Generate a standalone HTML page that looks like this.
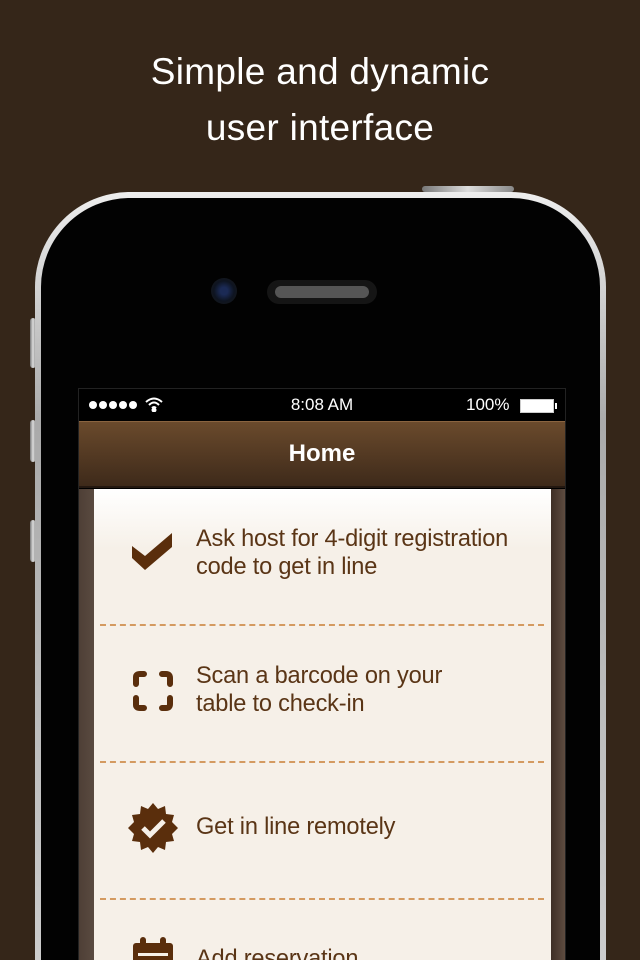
<!DOCTYPE html>
<html><head><style>
*{margin:0;padding:0;box-sizing:border-box}
html,body{width:640px;height:960px;overflow:hidden}
body{background:#352619;position:relative;font-family:"Liberation Sans",sans-serif}
.title{position:absolute;top:44px;left:0;width:640px;text-align:center;color:#fff;font-size:37px;line-height:56px;letter-spacing:.3px}
.btn{position:absolute;background:linear-gradient(90deg,#777,#ddd,#888);border-radius:3px}
.phone{position:absolute;left:35px;top:192px;width:571px;height:768px;border-radius:95px 95px 0 0;background:linear-gradient(180deg,#eee,#aaa 30%,#ccc);padding:6px 6px 0 6px}
.inner{width:100%;height:100%;border-radius:89px 89px 0 0;background:#020202}
.screen{position:absolute;left:78px;top:388px;width:488px;height:572px;background:#000;border:1px solid #222;border-bottom:0;overflow:hidden}
.status{height:32px;color:#fff;font-size:17px;position:relative}
.nav{height:67px;background:linear-gradient(180deg,#6a4a2c,#3e2a1a);border-top:1px solid #8a6440;border-bottom:2px solid #241810;color:#fff;font-size:24px;font-weight:bold;text-align:center;line-height:64px}
.content{position:absolute;top:100px;left:0;width:486px;height:500px;background:linear-gradient(90deg,#4e3f36,#65554a 6%,#4e3f36 14px)}
.card{position:absolute;left:15px;top:0;width:457px;height:500px;background:linear-gradient(180deg,#fff,#f6f0e8 60px,#f6f0e8)}
.right{position:absolute;right:0;top:0;width:14px;height:500px;background:linear-gradient(90deg,#3e2f26,#5e4c40)}
.row{position:absolute;left:0;width:457px;color:#5a3516;font-size:23.6px;line-height:28px;letter-spacing:-.2px}
.row .t{position:absolute;left:102px;white-space:nowrap}
.dash{position:absolute;left:6px;width:444px;height:0;border-top:2px dashed #d49a60}
.dot{position:absolute;top:12px;width:8px;height:8px;border-radius:50%;background:#fff}
</style></head><body>
<div class="title">Simple and dynamic<br>user interface</div>
<div class="btn" style="left:422px;top:186px;width:92px;height:6px"></div>
<div class="btn" style="left:30px;top:318px;width:6px;height:50px"></div>
<div class="btn" style="left:30px;top:420px;width:6px;height:42px"></div>
<div class="btn" style="left:30px;top:520px;width:6px;height:42px"></div>
<div class="phone"><div class="inner"></div></div>
<div style="position:absolute;left:211px;top:278px;width:26px;height:26px;border-radius:50%;background:radial-gradient(circle,#1b2a55 20%,#0e1420 55%,#1a1a1a)"></div>
<div style="position:absolute;left:267px;top:280px;width:110px;height:24px;border-radius:12px;background:#151515"><div style="margin:6px 8px;height:12px;border-radius:6px;background:#555"></div></div>
<div class="screen">
 <div class="status">
  <div class="dot" style="left:10px"></div><div class="dot" style="left:20px"></div><div class="dot" style="left:30px"></div><div class="dot" style="left:40px"></div><div class="dot" style="left:50px"></div>
  <svg style="position:absolute;left:66px;top:7px" width="18" height="16" viewBox="0 0 18 16" fill="none" stroke="#fff" stroke-width="2"><path d="M1 6 Q9 -1 17 6 M4 9 Q9 4 14 9 M7 12 Q9 10 11 12"/><circle cx="9" cy="14" r="1.5" fill="#fff"/></svg>
  <div style="position:absolute;left:0;width:486px;text-align:center;top:6px">8:08 AM</div>
  <div style="position:absolute;left:387px;top:6px">100%</div>
  <div style="position:absolute;left:441px;top:10px;width:34px;height:14px;background:#fff;border:1px solid #ccc"></div>
  <div style="position:absolute;left:476px;top:14px;width:2px;height:6px;background:#fff"></div>
 </div>
 <div class="nav">Home</div>
 <div class="content">
  <div class="card">
   <div class="row" style="top:36px">
    <svg style="position:absolute;left:37px;top:5px" width="44" height="44" viewBox="0 0 44 44"><path d="M1 16 L14 26 L41 3 L41 17 L14 40 L1 28 Z" fill="#5a2e0c"/></svg>
    <div class="t">Ask host for 4-digit registration<br>code to get in line</div>
   </div>
   <div class="dash" style="top:135px"></div>
   <div class="row" style="top:173px">
    <svg style="position:absolute;left:38px;top:8px" width="42" height="42" viewBox="0 0 42 42" fill="none" stroke="#5a2e0c" stroke-width="6" stroke-linecap="round"><path d="M4 14 V7 Q4 4 8 4 H12 M30 4 H34 Q38 4 38 8 V14 M4 28 V35 Q4 38 8 38 H12 M30 38 H34 Q38 38 38 34 V28"/></svg>
    <div class="t">Scan a barcode on your<br>table to check-in</div>
   </div>
   <div class="dash" style="top:272px"></div>
   <div class="row" style="top:324px">
    <svg style="position:absolute;left:33px;top:-11px" width="52" height="52" viewBox="-26 -26 52 52"><polygon fill="#5a2e0c" points="0,-25 5,-19 12,-22 13,-14 21,-13 19,-6 25,0 19,6 21,13 13,14 12,22 5,19 0,25 -5,19 -12,22 -13,14 -21,13 -19,6 -25,0 -19,-6 -21,-13 -13,-14 -12,-22 -5,-19"/><path d="M-10 0 L-3 7 L11 -7" stroke="#f6f0e8" stroke-width="5" fill="none"/></svg>
    <div class="t">Get in line remotely</div>
   </div>
   <div class="dash" style="top:409px"></div>
   <div class="row" style="top:456px">
    <svg style="position:absolute;left:38px;top:-8px" width="42" height="40" viewBox="0 0 42 40"><rect x="1" y="6" width="40" height="34" rx="3" fill="#5a2e0c"/><rect x="8" y="0" width="6" height="12" rx="3" fill="#5a2e0c"/><rect x="28" y="0" width="6" height="12" rx="3" fill="#5a2e0c"/><rect x="6" y="16" width="30" height="3" fill="#f6f0e8"/></svg>
    <div class="t">Add reservation</div>
   </div>
  </div>
  <div class="right"></div>
 </div>
</div>
</body></html>
